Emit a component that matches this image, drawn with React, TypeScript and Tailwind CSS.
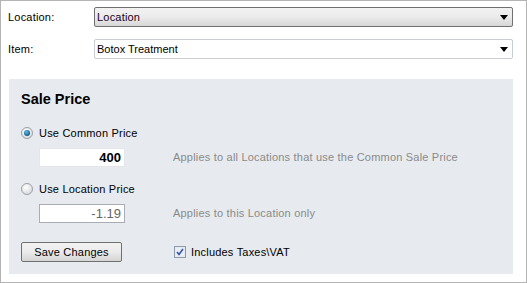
import React from 'react';

const font = { fontFamily: '"Liberation Sans", Arial, sans-serif' };

function Arrow() {
  return (
    <svg width="8" height="5" viewBox="0 0 8 5" className="shrink-0">
      <path d="M0 0H8L4 5Z" fill="#000" />
    </svg>
  );
}

function Radio({ checked }: { checked?: boolean }) {
  return (
    <svg width="12" height="12" viewBox="0 0 12 12" className="shrink-0">
      <defs>
        <radialGradient id={checked ? 'rc' : 'ru'} cx="0.4" cy="0.35" r="0.7">
          <stop offset="0" stopColor="#ffffff" />
          <stop offset="1" stopColor="#d6d8dc" />
        </radialGradient>
        <radialGradient id="dot" cx="0.4" cy="0.35" r="0.7">
          <stop offset="0" stopColor="#5fc0ec" />
          <stop offset="1" stopColor="#0b4f7e" />
        </radialGradient>
      </defs>
      <circle cx="6" cy="6" r="5.5" fill={`url(#${checked ? 'rc' : 'ru'})`} stroke="#9aa0a6" />
      {checked && <circle cx="6" cy="6" r="3" fill="url(#dot)" />}
    </svg>
  );
}

function Check() {
  return (
    <svg width="12" height="12" viewBox="0 0 12 12" className="shrink-0">
      <rect x="0.5" y="0.5" width="11" height="11" fill="#dfe4ee" stroke="#8f9aa8" />
      <rect x="1.5" y="1.5" width="9" height="9" fill="#e9edf5" />
      <path d="M3 6 L5 8.5 L9 3" stroke="#3355aa" strokeWidth="1.6" fill="none" />
    </svg>
  );
}

export default function App() {
  return (
    <div
      style={font}
      className="w-[527px] h-[283px] border border-[#b4b4b4] bg-white text-[11px] text-black"
    >
      {/* Location */}
      <div className="flex items-center h-[20px] mt-[6px]">
        <span className="w-[93px] pl-[7px] tracking-[0.2px]">Location:</span>
        <div className="w-[419px] h-[20px] flex items-center justify-between pl-[2px] pr-[4px] border border-[#707070] rounded-[2px] bg-gradient-to-b from-[#f2f2f2] via-[#ebebeb] to-[#d7d7d7]">
          <span className="text-[#1a001a] tracking-[0.2px]">Location</span>
          <Arrow />
        </div>
      </div>

      {/* Item */}
      <div className="flex items-center h-[20px] mt-[12px]">
        <span className="w-[93px] pl-[7px] tracking-[0.2px]">Item:</span>
        <div className="w-[419px] h-[20px] flex items-center justify-between pl-[2px] pr-[4px] border border-[#c9ccd2] rounded-[2px] bg-white">
          <span>Botox Treatment</span>
          <Arrow />
        </div>
      </div>

      {/* Sale Price panel */}
      <div className="ml-[8px] mt-[20px] w-[504px] h-[195px] bg-[#e7eaef] pl-[12px] flex flex-col">
        <div className="mt-[11px] h-[18px] text-[14.5px] font-bold leading-[18px]">Sale Price</div>

        <div className="mt-[18px] h-[14px] flex items-center gap-[6px]">
          <Radio checked />
          <span className="tracking-[0.2px]">Use Common Price</span>
        </div>

        <div className="mt-[8px] flex items-center">
          <div className="ml-[18px] w-[86px] h-[19px] bg-white border border-[#e4e6ea] flex items-center justify-end pr-[3px] font-bold text-[13px]">
            400
          </div>
          <span className="ml-[48px] text-[#8a8a8a] tracking-[0.2px]">
            Applies to all Locations that use the Common Sale Price
          </span>
        </div>

        <div className="mt-[15px] h-[14px] flex items-center gap-[6px]">
          <Radio />
          <span className="tracking-[0.2px]">Use Location Price</span>
        </div>

        <div className="mt-[8px] flex items-center">
          <div className="ml-[18px] w-[86px] h-[19px] bg-white border border-[#a9acb2] flex items-center justify-end pr-[3px] text-[13px] text-[#666666]">
            -1.19
          </div>
          <span className="ml-[48px] text-[#8a8a8a] tracking-[0.2px]">Applies to this Location only</span>
        </div>

        <div className="mt-[19px] flex items-center">
          <div className="w-[101px] h-[20px] border border-[#707070] rounded-[2px] bg-gradient-to-b from-[#f2f2f2] via-[#ebebeb] to-[#d5d5d5] flex items-center justify-center tracking-[0.2px]">
            Save Changes
          </div>
          <div className="ml-[52px] flex items-center gap-[5px]">
            <Check />
            <span className="tracking-[0.2px]">Includes Taxes\VAT</span>
          </div>
        </div>
      </div>
    </div>
  );
}
